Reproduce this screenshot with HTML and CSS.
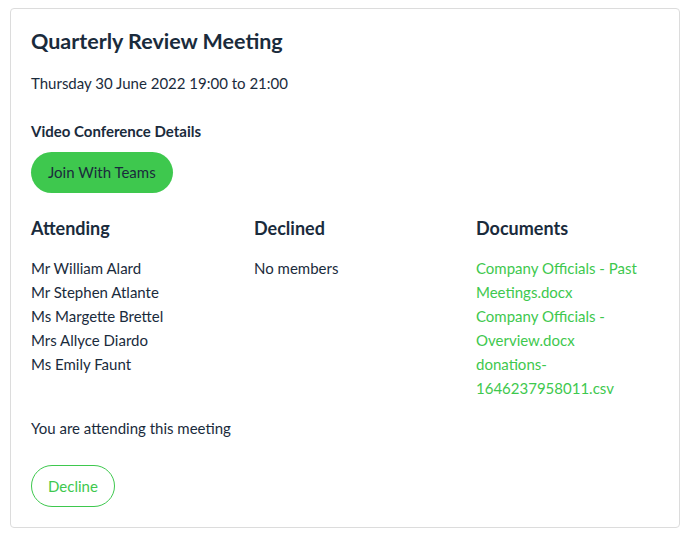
FILE: index.html
```html
<!DOCTYPE html>
<html>
<head>
<meta charset="utf-8">
<link rel="stylesheet" href="styles.css">
</head>
<body>
<div class="card">
  <h1 class="title">Quarterly Review Meeting</h1>
  <p class="date">Thursday 30 June 2022 19:00 to 21:00</p>
  <h3 class="subhead">Video Conference Details</h3>
  <a class="btn-join">Join With Teams</a>
  <div class="cols">
    <div class="col">
      <h2 class="col-title">Attending</h2>
      <ul class="list">
        <li>Mr William Alard</li>
        <li>Mr Stephen Atlante</li>
        <li>Ms Margette Brettel</li>
        <li>Mrs Allyce Diardo</li>
        <li>Ms Emily Faunt</li>
      </ul>
    </div>
    <div class="col">
      <h2 class="col-title">Declined</h2>
      <ul class="list">
        <li>No members</li>
      </ul>
    </div>
    <div class="col">
      <h2 class="col-title">Documents</h2>
      <ul class="list docs">
        <li><a>Company Officials - Past Meetings.docx</a></li>
        <li><a>Company Officials - Overview.docx</a></li>
        <li><a>donations-1646237958011.csv</a></li>
      </ul>
    </div>
  </div>
  <p class="status">You are attending this meeting</p>
  <a class="btn-decline">Decline</a>
</div>
</body>
</html>
```
FILE: styles.css
```css
* { box-sizing: border-box; }
body {
  margin: 0;
  padding: 8px 9px 0 10px;
  background: #fff;
  font-family: Lato, "Noto Sans", sans-serif;
  color: #1a2b3c;
}
.card {
  border: 1px solid #dcdcdc;
  border-radius: 4px;
  padding: 16px 20px 19px 20px;
  height: 520px;
}
.title {
  margin: 0;
  font-size: 21.5px;
  font-weight: 700;
  line-height: 32px;
}
.date {
  margin: 15px 0 0;
  font-size: 15px;
  line-height: 22px;
}
.subhead {
  margin: 26px 0 0;
  font-size: 15px;
  font-weight: 700;
  line-height: 22px;
}
.btn-join {
  display: inline-block;
  margin-top: 10px;
  height: 41px;
  line-height: 41px;
  padding: 0 17px;
  border-radius: 21px;
  background: #3ec84e;
  color: #1a2b3c;
  font-size: 15px;
}
.cols {
  display: grid;
  grid-template-columns: 223px 222px 190px;
  margin-top: 22px;
}
.col-title {
  margin: 0;
  font-size: 18px;
  font-weight: 700;
  line-height: 26px;
}
.list {
  list-style: none;
  margin: 15px 0 0;
  padding: 0;
  font-size: 15px;
  line-height: 24px;
}
.docs a { color: #3ec84e; }
.status {
  margin: 17px 0 0;
  font-size: 15px;
  line-height: 22px;
}
.btn-decline {
  display: inline-block;
  margin-top: 26px;
  height: 42px;
  line-height: 40px;
  padding: 0 16px;
  border: 1px solid #3ec84e;
  border-radius: 21px;
  color: #3ec84e;
  font-size: 15px;
}
```
